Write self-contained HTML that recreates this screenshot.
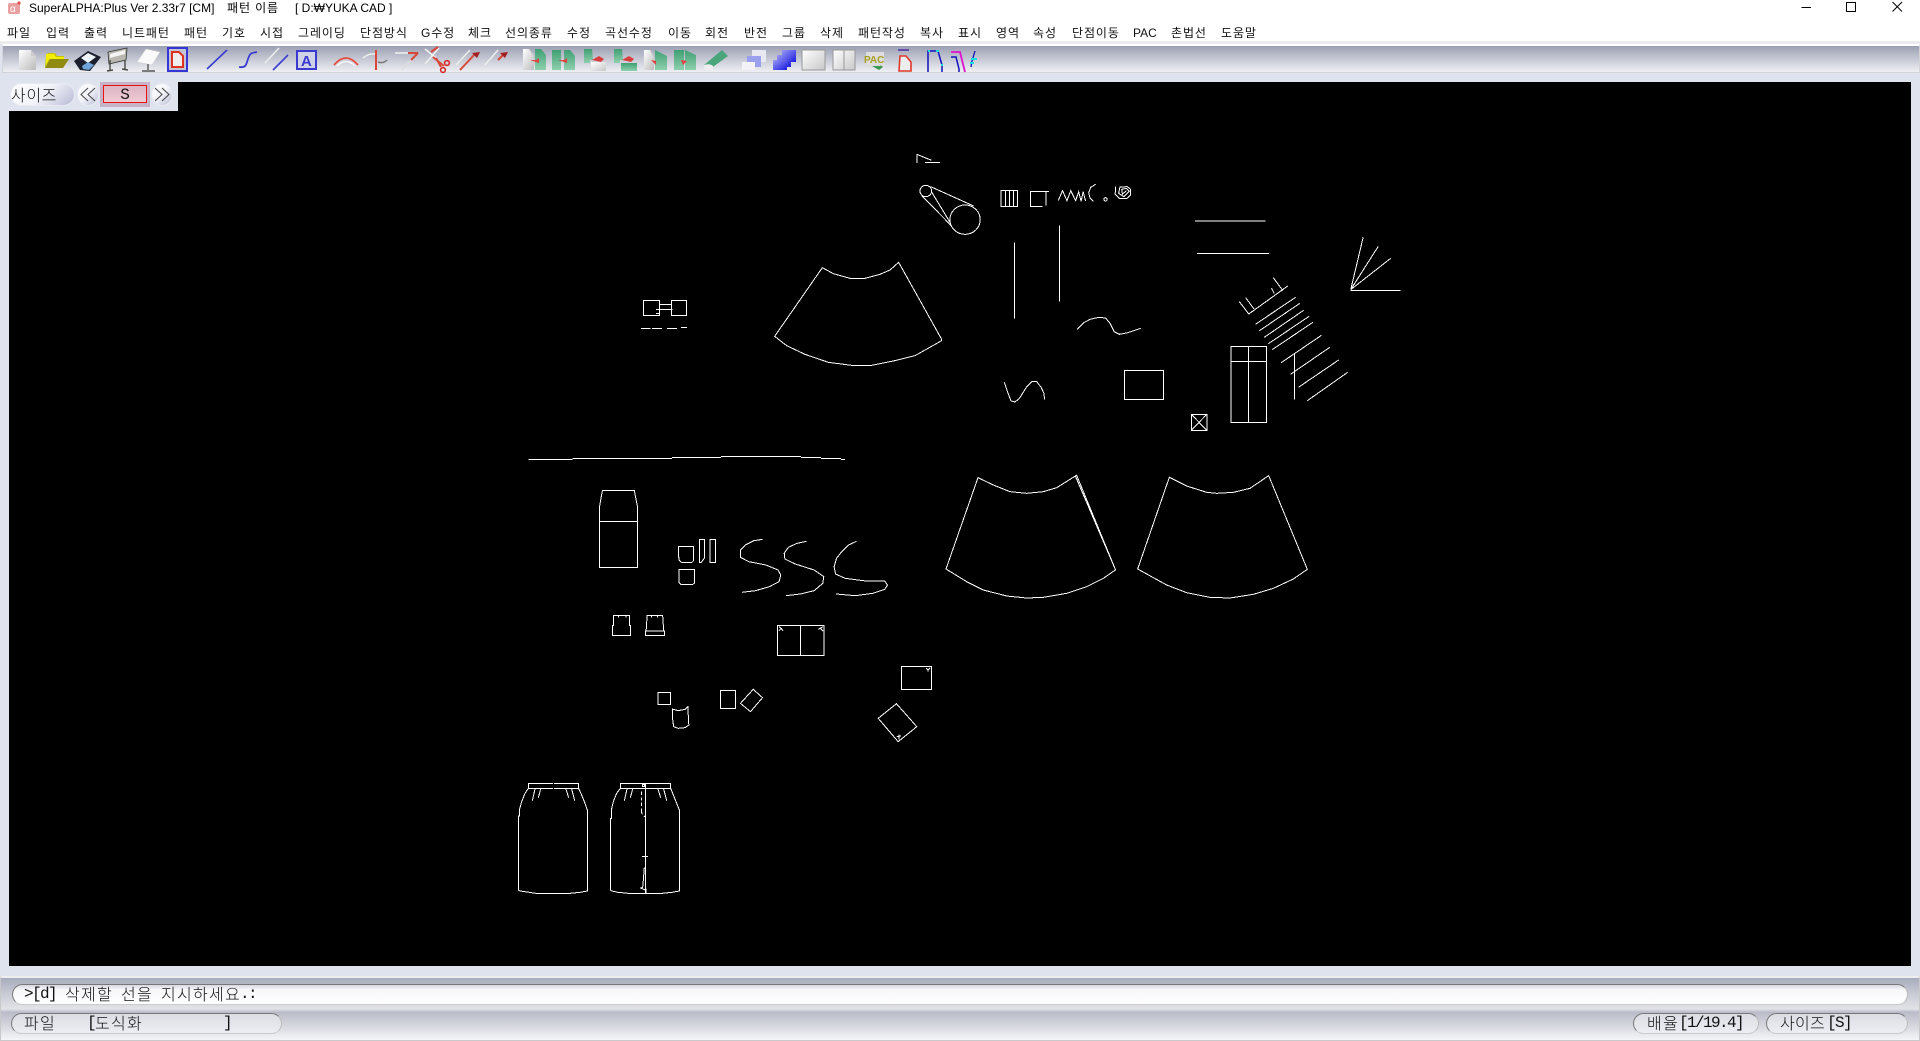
<!DOCTYPE html>
<html lang="ko"><head><meta charset="utf-8"><title>SuperALPHA:Plus</title>
<style>
html,body{margin:0;padding:0;width:1920px;height:1041px;overflow:hidden;background:#dfe3ed}
body{position:relative;font-family:"Liberation Sans","Noto Sans CJK KR",sans-serif;color:#000}
.a{position:absolute}
.t{position:absolute;white-space:pre;font-size:12px;line-height:16px}
.m{position:absolute;top:25px;white-space:pre;font-size:12px;line-height:16px;color:#111;letter-spacing:.9px}
.g{position:absolute;white-space:pre;font-size:16px;line-height:20px;font-family:"Noto Sans CJK KR","NanumGothic",sans-serif;letter-spacing:1.28px;color:#111;font-weight:300}
.l{position:absolute;white-space:pre;font-size:16px;line-height:20px;font-family:"Liberation Mono",monospace;letter-spacing:-1.6px;color:#111}
.p{position:absolute;box-sizing:border-box;border:1px solid #777;border-bottom-color:#ccc;border-right-color:#bbb;border-radius:11px;background:linear-gradient(#d8d9e0,#f7f7fa 25%,#fff)}
.c{position:absolute;top:83px;height:23px;box-sizing:border-box;border:1px solid #e8eaf2;background:linear-gradient(135deg,#fff,#f2f3f9 50%,#b7bbd4)}
</style></head><body>
<div class="a" style="left:0;top:0;width:1920px;height:43px;background:#fff"></div>
<div class="a" style="left:0;top:41px;width:1920px;height:3px;background:#ececec"></div>
<div class="a" style="left:2px;top:44px;width:1918px;height:29px;box-sizing:border-box;border:1px solid #d4d4d8;border-top:2px solid #fff;background:linear-gradient(#9b9fb2,#b5b8c6 30%,#eef0f4)"></div>
<div class="a" style="left:9px;top:82px;width:1902px;height:884px;background:#000"></div>
<div class="a" style="left:0;top:76px;width:178px;height:35px;background:#dfe3ed"></div>
<div class="a" style="left:0;top:976px;width:1920px;height:65px;box-sizing:border-box;border:1px solid #c9c9cc;border-top:2px solid #eee;background:linear-gradient(#a8acbc,#c8cad4 25%,#e2e3e8 50%,#b9bbc8 55%,#f4f5f7)"></div>

<div class="t" style="left:29px;top:0">SuperALPHA:Plus Ver 2.33r7 [CM]</div>
<div class="t" style="left:227px;top:0;letter-spacing:.9px">패턴 이름</div>
<div class="t" style="left:295px;top:0">[ D:₩YUKA CAD ]</div>

<span class="m" style="left:7px">파일</span><span class="m" style="left:46px">입력</span><span class="m" style="left:84px">출력</span><span class="m" style="left:122px">니트패턴</span><span class="m" style="left:184px">패턴</span><span class="m" style="left:222px">기호</span><span class="m" style="left:260px">시접</span><span class="m" style="left:298px">그레이딩</span><span class="m" style="left:360px">단점방식</span><span class="m" style="left:421px">G수정</span><span class="m" style="left:468px">체크</span><span class="m" style="left:505px">선의종류</span><span class="m" style="left:567px">수정</span><span class="m" style="left:605px">곡선수정</span><span class="m" style="left:668px">이동</span><span class="m" style="left:705px">회전</span><span class="m" style="left:744px">반전</span><span class="m" style="left:782px">그룹</span><span class="m" style="left:820px">삭제</span><span class="m" style="left:858px">패턴작성</span><span class="m" style="left:920px">복사</span><span class="m" style="left:958px">표시</span><span class="m" style="left:996px">영역</span><span class="m" style="left:1033px">속성</span><span class="m" style="left:1072px">단점이동</span><span class="m" style="left:1133px;letter-spacing:0">PAC</span><span class="m" style="left:1171px">촌법선</span><span class="m" style="left:1221px">도움말</span>

<!-- size panel -->
<div class="c" style="left:10px;width:65px;border-radius:12px"></div>
<div class="g" style="left:11px;top:84px;font-size:16px;letter-spacing:.6px">사이즈</div>
<div class="c" style="left:77px;width:22px;border-radius:50%"></div>
<div class="c" style="left:151px;width:22px;border-radius:50%"></div>
<div class="a" style="left:100px;top:82px;width:50px;height:25px;background:#c7b3c8"></div>
<div class="a" style="left:103px;top:85px;width:44px;height:18px;box-sizing:border-box;border:1px solid #f01010;background:linear-gradient(#dcb4c2,#eccbd4)"></div>
<div class="l" style="left:117px;top:85px;font-size:16px;width:16px;text-align:center;letter-spacing:0">S</div>

<!-- bottom bars -->
<div class="p" style="left:12px;top:984px;width:1896px;height:21px"></div>
<div class="p" style="left:11px;top:1013px;width:271px;height:21px;background:linear-gradient(#dcdde4,#eceef3)"></div>
<div class="p" style="left:1633px;top:1013px;width:126px;height:21px;background:linear-gradient(#dcdde4,#eceef3)"></div>
<div class="p" style="left:1766px;top:1013px;width:142px;height:21px;background:linear-gradient(#dcdde4,#eceef3)"></div>
<div class="l" style="left:24px;top:984px">&gt;[d]</div>
<div class="g" style="left:65px;top:983px">삭제할</div>
<div class="g" style="left:121px;top:983px">선을</div>
<div class="g" style="left:161px;top:983px">지시하세요</div>
<div class="l" style="left:240px;top:984px">.:</div>
<div class="g" style="left:24px;top:1012px">파일</div>
<div class="l" style="left:87px;top:1013px">[</div>
<div class="g" style="left:95px;top:1012px">도식화</div>
<div class="l" style="left:223px;top:1013px">]</div>
<div class="g" style="left:1647px;top:1012px">배율</div>
<div class="l" style="left:1679px;top:1013px">[1/19.4]</div>
<div class="g" style="left:1780px;top:1012px;letter-spacing:.3px">사이즈</div>
<div class="l" style="left:1827px;top:1013px">[S]</div>

<!-- UI icons -->
<svg class="a" style="left:0;top:0" width="1920" height="1041" viewBox="0 0 1920 1041">
<defs>
<linearGradient id="w" x1="0" y1="0" x2="1" y2="1"><stop offset="0" stop-color="#fff"/><stop offset="1" stop-color="#bbb"/></linearGradient>
<linearGradient id="gr" x1="0" y1="0" x2="0" y2="1"><stop offset="0" stop-color="#3f9f73"/><stop offset="1" stop-color="#8fd0ad"/></linearGradient>
<linearGradient id="bl" x1="0" y1="0" x2="1" y2="1"><stop offset="0" stop-color="#9a9af5"/><stop offset="1" stop-color="#1a1ae0"/></linearGradient>
<linearGradient id="sq" x1="0" y1="0" x2="1" y2="1"><stop offset="0" stop-color="#fff"/><stop offset="1" stop-color="#c8c8c8"/></linearGradient>
</defs>
<!-- app icon -->
<rect x="8" y="3" width="12" height="11" rx="2" fill="#e9a0a0"/><text x="10" y="12" font-size="10" fill="#fff" font-family="Liberation Sans">α</text><circle cx="19" cy="3" r="1.6" fill="#e05050"/>
<!-- window -->
<path d="M1801.5 7.5H1811M1846.5 2.5h9v9h-9zM1892.5 2L1902 11.5M1902 2L1892.5 11.5" fill="none" stroke="#000" stroke-width="1"/>
<!-- new doc -->
<path d="M19 50h12l5 6v14H19z" fill="url(#w)"/><path d="M31 50v6h5" fill="#ccc"/>
<!-- folder -->
<path d="M46 55l2-2h7l2 3h7v3H50l-5 9z" fill="#c9c400"/><path d="M50 59h19l-6 9H45z" fill="#8f8a10"/><path d="M46 54h8l2 3h8v2H49l-3 6z" fill="#f2ee00"/>
<!-- floppy -->
<path d="M74 61L88 51L101 57L90 71L80 70z" fill="#1b1f2e"/><path d="M81 58L88 53L96 57L88 63z" fill="#eef3f8"/><path d="M82 66L88 62L94 65L89 70L83 69z" fill="#6ea4da"/>
<!-- plotter -->
<path d="M108 52L127 48L126 60L109 64z" fill="#b8b8ae" stroke="#333" stroke-width=".8"/><path d="M110 54L125 50V54L110 58z" fill="#f4f4f4"/><path d="M110 60V71M125 60V69M107 71l6-1M122 69l6 1" stroke="#4a4a44" stroke-width="1.4" fill="none"/>
<!-- table -->
<path d="M146 49L160 52L152 65L137 62z" fill="#fafafa" stroke="#ccc" stroke-width=".5"/><path d="M148 64V70M142 71H155" stroke="#555" stroke-width="1.4"/>
<!-- doc box -->
<rect x="168" y="48" width="19" height="23" fill="#c2c5d2" stroke="#3636d8" stroke-width="2"/><path d="M172 52h7l4 4v11h-11z" fill="#eee" stroke="#e03020" stroke-width="2"/>
<!-- lines -->
<path d="M207 69L227 50" stroke="#3a3ad0" stroke-width="1.6" fill="none"/>
<path d="M239 67c7 1 7-2 9-8s3-6 9-7" stroke="#3a3ad0" stroke-width="1.8" fill="none"/>
<path d="M265 63L279 48" stroke="#eee" stroke-width="1.6"/><path d="M273 70L288 55" stroke="#3a3ad0" stroke-width="1.6"/>
<rect x="297" y="51" width="19" height="18" fill="#cfd2e6" stroke="#3a3ad0" stroke-width="2"/><text x="301" y="66" font-size="15" font-weight="bold" fill="#3a3ad0" font-family="Liberation Sans">A</text>
<!-- red tools -->
<path d="M334 65Q346 51 358 65" stroke="#e84c3c" stroke-width="1.8" fill="none"/><path d="M337 66Q346 57 355 66" stroke="#fff" stroke-width="1.2" fill="none"/>
<path d="M376 50V70" stroke="#d84838" stroke-width="2"/><path d="M363 58q6-5 12-4" stroke="#eee" stroke-width="1.5" fill="none"/><path d="M378 62q5 2 9-2" stroke="#777" stroke-width="1.5" fill="none"/>
<path d="M395 53H408" stroke="#eee" stroke-width="1.6"/><path d="M408 53h10" stroke="#d84838" stroke-width="2"/><path d="M418 53L411 60" stroke="#d84838" stroke-width="2"/><path d="M411 60L402 70" stroke="#ddd" stroke-width="1.6"/>
<path d="M425 49L436 58M439 48L425 64" stroke="#f0f0f0" stroke-width="1.5"/><path d="M431 52L438 47M433 57L444 66M436 58L441 67" stroke="#d84838" stroke-width="2"/><circle cx="443" cy="70" r="2.4" fill="none" stroke="#d82020" stroke-width="1.5"/><circle cx="447" cy="63" r="2.4" fill="none" stroke="#d82020" stroke-width="1.5"/>
<path d="M456 65L470 50" stroke="#eee" stroke-width="1.5"/><path d="M460 70L475 54" stroke="#d84838" stroke-width="2"/><path d="M480 52l-8 1 5 5z" fill="#a02020"/>
<path d="M485 65L498 50" stroke="#eee" stroke-width="1.5"/><path d="M498 60L505 53" stroke="#d84838" stroke-width="2"/><path d="M508 52l-8 1 5 5z" fill="#a02020"/>
<!-- green tools -->
<path d="M523 49h6l5 7v14h-11z" fill="url(#w)"/><path d="M535 49h6l5 6v15h-11z" fill="url(#gr)"/><path d="M530 60h6l3-2v5z" fill="#e04040"/>
<path d="M552 50h9v20h-9z" fill="url(#gr)"/><path d="M564 50h6l5 6v14h-11z" fill="url(#gr)"/><path d="M558 60h6l3-2v5z" fill="#e04040"/>
<path d="M584 49h8l1 11h-3v3h-6z" fill="url(#gr)"/><path d="M592 60l7-4 5 3-3 3z" fill="#d84040"/><path d="M591 62h15v9h-15z" fill="url(#sq)"/>
<path d="M614 49h8l1 11h-3v3h-6z" fill="url(#gr)"/><path d="M622 60l7-4 5 3-3 3z" fill="#d84040"/><path d="M621 63h16v8h-16z" fill="url(#gr)"/>
<path d="M644 50h6l4 7v13h-10z" fill="url(#w)"/><path d="M655 50l12 6v14h-12z" fill="url(#gr)"/><path d="M651 60l5 1v4z" fill="#e04040"/>
<path d="M674 50h10v20h-10z" fill="url(#gr)"/><path d="M685 50l11 5v15h-11z" fill="url(#gr)"/><path d="M681 60l6 1-4 4z" fill="#e04040"/>
<path d="M704 65l18-15 6 6-18 13z" fill="#4aa57a"/><path d="M704 65q6-2 9 1v4h-8z" fill="#eee"/>
<!-- layers -->
<rect x="752" y="50" width="14" height="12" fill="#e8e8f2"/><rect x="747" y="56" width="14" height="11" fill="#9aa0ee"/><rect x="742" y="62" width="13" height="8" fill="#f2f2f7"/>
<rect x="782" y="50" width="14" height="12" fill="url(#bl)"/><rect x="777" y="55" width="14" height="12" fill="url(#bl)"/><rect x="773" y="60" width="14" height="10" fill="url(#bl)"/>
<rect x="802" y="50" width="23" height="20" fill="url(#sq)" stroke="#999"/><rect x="833" y="50" width="22" height="20" fill="url(#sq)" stroke="#999"/><path d="M844 50v20" stroke="#999"/>
<rect x="866" y="52" width="18" height="15" fill="#ddd"/><text x="864" y="63" font-size="10" font-weight="bold" fill="#a8a020" font-family="Liberation Sans">PAC</text><path d="M872 66h9l-2-2 4 3-4 3z" fill="#3a9a50"/>
<path d="M899 50h10M900 56h6l5 6v9h-12z" fill="#eee" stroke="#e03828" stroke-width="1.6"/><path d="M898 50h11" stroke="#3a3ac0" stroke-width="1.4" fill="none"/>
<path d="M928 72V51h10l4 14v7" stroke="#1010c0" stroke-width="1.5" fill="none"/><path d="M928 51h2M936 51h3M941 65h2" stroke="#10e0e0" stroke-width="2"/>
<path d="M951 52h9l3 12 2 8" stroke="#e010d0" stroke-width="1.8" fill="none"/><path d="M951 57h5l3 12v3" stroke="#1010c0" stroke-width="1.5" fill="none"/>
<path d="M975 51l-3 10-1 6" stroke="#1010c0" stroke-width="1.3" fill="none"/><path d="M971 59h6M970 63h4" stroke="#10e0e0" stroke-width="2"/>
<!-- chevrons -->
<path d="M88 88l-7 6.500 7 6.500M95 88l-7 6.500 7 6.500M155 88l7 6.500-7 6.500M162 88l7 6.500-7 6.500" fill="none" stroke="#444" stroke-width="1"/>
</svg>

<!-- CAD drawing -->
<svg class="a" style="left:0;top:0" width="1920" height="1041" viewBox="0 0 1920 1041" fill="none" stroke="#fff" stroke-width="1" shape-rendering="crispEdges">
<style>path,rect,circle,ellipse{vector-effect:non-scaling-stroke}</style>
<!-- Z3 -->
<g transform="translate(880 130) scale(.34435 .33333)">
<path d="M107 99V73L150 91M130 97H174"/>
<ellipse cx="133" cy="183" rx="17" ry="17"/><ellipse cx="247" cy="269" rx="44" ry="44"/>
<path d="M147 170L272 228M122 198L208 288M150 186L205 280"/>
<rect x="352" y="181" width="48" height="48"/><path d="M364 181V229M376 181V229M388 181V229"/>
<path d="M472 229H437V184H491M482 184V226"/>
<path d="M518 211L530 182L543 212L554 182L568 212L577 185L584 214L590 185L597 213"/>
<path d="M626 163L612 172L606 188L610 204L620 214"/>
<circle cx="655" cy="208" r="5"/>
<path d="M684 169L683 192L695 205L716 206L728 195V178L718 170L697 171L693 190L708 200L724 184L716 175L702 178L704 192L716 182"/>
<path d="M390 337V566M521 286V515"/>
<path d="M915 273H1120M920 370H1129"/>
<path d="M1367 479L1403 322M1367 479L1447 349M1367 479L1483 385M1367 481H1512"/>
<path d="M1043 514L1071 552L1184 468M1062 503L1086 537M1142 443L1170 482M1137 475L1145 490"/>
<path d="M1090 583L1207 502M1102 602L1219 520M1116 622L1230 541M1128 641L1246 559M1139 659L1257 577M1165 698L1282 616M1192 733L1306 652M1215 772L1332 690M1241 812L1358 727"/>
<path d="M1204 672V809"/>
<rect x="1020" y="649" width="103" height="229"/><path d="M1070 649V878M1020 694H1123"/>
<rect x="710" y="721" width="114" height="87"/>
<rect x="904" y="853" width="45" height="48"/><path d="M904 853L949 901M949 853L904 901"/>
<path d="M573 598L592 578L610 568L635 562L655 564L668 580L680 605L695 613L720 608L757 595"/>
<path d="M361 757L372 790L380 812L392 816L405 805L425 772L442 754L455 755L468 772L476 790L478 808"/>
</g>
<!-- Z4 -->
<g transform="translate(500 240) scale(.33333)">
<rect x="430" y="181" width="49" height="46"/><rect x="514" y="181" width="46" height="46"/>
<path d="M479 193H514M468 208H518M468 220H479"/>
<path d="M423 265H451M456 265H486M501 265H531M543 262H561"/>
<path d="M967 83L1000 101L1050 115H1095L1140 103L1170 90L1196 67L1325 298V302L1245 347L1180 363L1115 376H1055L985 367L915 343L860 317L824 289Z"/>
<path d="M85 659H218M218 656H516M516 652H663M663 649H903M903 652H963M963 655H1023M1023 658H1035"/>
</g>
<!-- Z5 -->
<g transform="translate(580 470) scale(.34435 .33333)">
<path d="M56 155V115L60 90L65 62H158L162 85L167 110V155"/><rect x="56" y="155" width="111" height="137"/>
<path d="M286 230H330V272L325 277H295L287 270Z"/>
<path d="M288 298H333V338L328 343H293L288 338Z"/>
<path d="M347 208H361V265L352 277H347Z"/><rect x="378" y="208" width="16" height="69"/>
<path d="M530 208L505 212L480 225L466 240V262L490 275L540 285L575 300L583 315L578 335L550 350L510 362L470 367"/>
<path d="M658 214L630 220L605 232L593 250L595 267L625 282L680 300L708 320L705 340L680 362L640 372L598 377"/>
<path d="M803 214L780 225L760 245L745 265L738 290L742 312L770 325L830 333H885L893 345L885 358L850 370L800 377L743 372"/>
<path d="M97 436H144V467H147V496H94V467H97ZM112 436V443M134 436V443"/>
<path d="M195 436H240L243 483H192ZM208 436V443M225 436V443"/><rect x="190" y="483" width="56" height="13"/>
<rect x="573" y="466" width="135" height="90"/><path d="M640 466V556M578 470L590 482M578 482L586 474M692 478L706 470M698 474L706 484"/>
<rect x="933" y="589" width="88" height="70"/><path d="M1005 594L1011 600L1017 594M1011 600V604"/>
<rect x="227" y="667" width="36" height="37"/><rect x="408" y="661" width="44" height="55"/>
<path d="M503 658L530 683L495 725L466 700Z"/>
<path d="M268 717L285 722L305 718L313 710L316 765L305 773L285 775L272 770L268 740Z"/>
<path d="M919 701L978 770L924 815L866 745ZM926 793V808M920 800L932 798"/>
</g>
<!-- Z7 -->
<g transform="translate(920 460) scale(.33333)">
<path d="M174 53L220 75L270 95L320 100L370 95L410 83L466 48L586 328V330L550 355L500 380L440 400L370 412L320 414L260 408L190 390L140 365L78 327Z"/>
<path d="M466 48L470 46L586 328"/>
<path d="M748 52L800 78L860 97L890 100L940 97L990 85L1046 47L1162 328L1120 357L1060 385L1000 403L930 414L870 412L800 398L740 375L653 327Z"/>
</g>
<!-- Z6 -->
<g transform="translate(500 760) scale(.33333)">
<path d="M159 70H85V85H159M162 70H236V85H162"/>
<path d="M85 85L75 100L65 125L58 150V168H55V390L60 393L75 395L108 400H210L240 397L262 393V150L255 130L245 105L236 85"/>
<path d="M105 87L97 122M122 87L115 113M198 87L206 113M215 87L224 122"/>
<rect x="361" y="70" width="151" height="15"/><rect x="428" y="73" width="6" height="6"/>
<path d="M361 85L350 100L340 125L334 150V175H331V390L336 393L354 397L385 400H486L516 397L538 393V150L530 130L520 105L512 85"/>
<path d="M381 87L373 122M398 87L391 113M474 87L482 113M491 87L500 122"/>
<path d="M436 70V400M438 385V400"/>
<path d="M424 95V105M424 112V122M424 128V138M424 145V155L427 163M431 168L436 170"/>
<path d="M426 289H444"/>
<path d="M433 322L430 360L428 382L422 384L436 390"/>
</g>
</svg>
</body></html>
